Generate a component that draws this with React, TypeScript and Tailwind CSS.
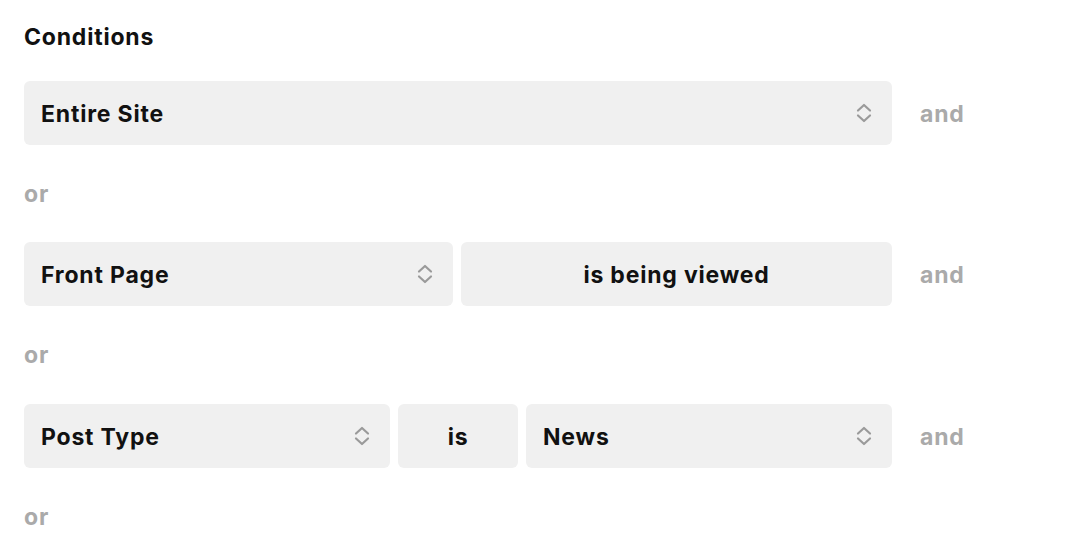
import React from "react";

function Chevrons() {
  return (
    <svg width="18" height="22" viewBox="0 0 18 22" fill="none" className="shrink-0">
      <path d="M3 8.5 L9 3 L15 8.5" stroke="#9a9a9a" strokeWidth="2.2" strokeLinecap="round" strokeLinejoin="round" />
      <path d="M3 13.5 L9 19 L15 13.5" stroke="#9a9a9a" strokeWidth="2.2" strokeLinecap="round" strokeLinejoin="round" />
    </svg>
  );
}

function Select({ label, className }: { label: string; className: string }) {
  return (
    <div className={`h-16 rounded-md bg-[#f0f0f0] flex items-center justify-between pl-[17px] pr-[19px] ${className}`}>
      <span className="pt-0.5">{label}</span>
      <Chevrons />
    </div>
  );
}

function Static({ label, className }: { label: string; className: string }) {
  return (
    <div className={`h-16 rounded-md bg-[#f0f0f0] flex items-center justify-center pt-0.5 ${className}`}>
      {label}
    </div>
  );
}

function Row({ children }: { children: React.ReactNode }) {
  return (
    <div className="flex items-center">
      <div className="flex gap-2 w-[868px]">{children}</div>
      <span className="ml-7 pt-0.5 text-[#aaaaaa]">and</span>
    </div>
  );
}

function Or({ h }: { h: string }) {
  return <div className={`${h} flex items-center pt-px text-[#aaaaaa]`}>or</div>;
}

export default function App() {
  return (
    <div
      className="w-[1070px] h-[554px] bg-white text-[#111] font-bold text-[23px] tracking-[0.035em] px-6 overflow-hidden"
      style={{ fontFamily: "Inter, 'Noto Sans', sans-serif" }}
    >
      <div className="h-[81px] pt-[21px] leading-[32px]">Conditions</div>
      <Row>
        <Select label="Entire Site" className="flex-1" />
      </Row>
      <Or h="h-[97px]" />
      <Row>
        <Select label="Front Page" className="w-[429px]" />
        <Static label="is being viewed" className="flex-1" />
      </Row>
      <Or h="h-[98px]" />
      <Row>
        <Select label="Post Type" className="w-[366px]" />
        <Static label="is" className="w-[120px]" />
        <Select label="News" className="flex-1" />
      </Row>
      <Or h="h-[97px]" />
    </div>
  );
}
